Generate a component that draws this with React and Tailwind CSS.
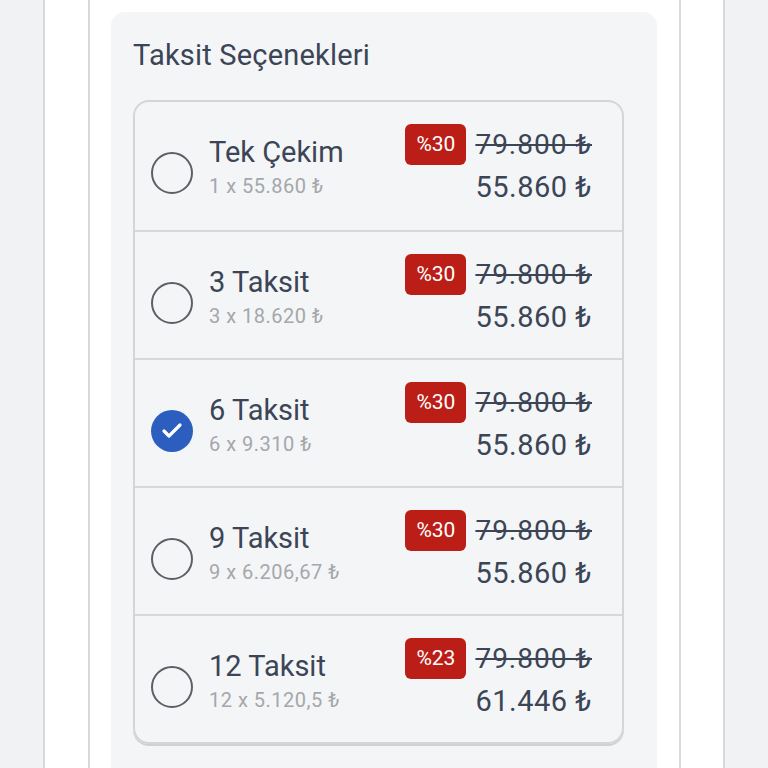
import { Check } from 'lucide-react'

const options = [
  { title: 'Tek Çekim', sub: '1 x 55.860 ₺', pct: '%30', old: '79.800 ₺', price: '55.860 ₺' },
  { title: '3 Taksit', sub: '3 x 18.620 ₺', pct: '%30', old: '79.800 ₺', price: '55.860 ₺' },
  { title: '6 Taksit', sub: '6 x 9.310 ₺', pct: '%30', old: '79.800 ₺', price: '55.860 ₺', checked: true },
  { title: '9 Taksit', sub: '9 x 6.206,67 ₺', pct: '%30', old: '79.800 ₺', price: '55.860 ₺' },
  { title: '12 Taksit', sub: '12 x 5.120,5 ₺', pct: '%23', old: '79.800 ₺', price: '61.446 ₺' },
]

function Radio({ checked }) {
  if (checked) {
    return (
      <div className="flex h-[42px] w-[42px] shrink-0 items-center justify-center rounded-full bg-[#2b5ebf]">
        <Check size={24} strokeWidth={3.2} className="text-white" />
      </div>
    )
  }
  return <div className="h-[42px] w-[42px] shrink-0 rounded-full border-2 border-[#5b5f66]" />
}

export default function App() {
  return (
    <div className="h-screen overflow-hidden bg-[#f1f2f4] font-['Roboto',sans-serif]">
      <div className="ml-[43px] h-full w-[682px] border-x-2 border-[#d8d9dc] bg-white pl-[43px] pr-[42px]">
        <div className="h-full border-x-2 border-[#d8d9dc] bg-white pl-[21px] pr-[22px] pt-[12px]">
          <div className="h-[820px] rounded-[14px] bg-[#f4f5f7] pl-[22px] pt-[26px]">
            <h2 className="text-[29px] leading-[34px] tracking-[0.2px] text-[#3b4556]">Taksit Seçenekleri</h2>

            <div className="mt-[28px] w-[491px] overflow-hidden rounded-[16px] border-2 border-[#d3d5d9] shadow-[0_2px_0_#cfd1d5]">
              {options.map((o, i) => (
                <div
                  key={o.title}
                  className={`flex h-[128px] pl-[16px] pr-[30px] ${i > 0 ? 'border-t-2 border-[#d6d8dc]' : ''}`}
                >
                  <div className="mt-[50px]">
                    <Radio checked={o.checked} />
                  </div>
                  <div className="ml-[16px] flex-1 pt-[33px]">
                    <p className="text-[29px] leading-[34px] text-[#3b4556]">{o.title}</p>
                    <p className="mt-[5px] text-[20px] leading-[24px] tracking-[0.5px] text-[#a4a7ac]">{o.sub}</p>
                  </div>
                  <div className="flex flex-col items-end pt-[22px]">
                    <div className="flex items-center gap-[9px]">
                      <span className="flex h-[41px] w-[61px] items-center justify-center rounded-[6px] bg-[#bb1d17] text-[21px] text-white">
                        {o.pct}
                      </span>
                      <span className="text-[28px] leading-[32px] tracking-[1px] text-[#3b4556] line-through decoration-[2px]">{o.old}</span>
                    </div>
                    <p className="mt-[5px] text-[29px] leading-[34px] tracking-[0.5px] text-[#3b4556]">{o.price}</p>
                  </div>
                </div>
              ))}
            </div>
          </div>
        </div>
      </div>
    </div>
  )
}
